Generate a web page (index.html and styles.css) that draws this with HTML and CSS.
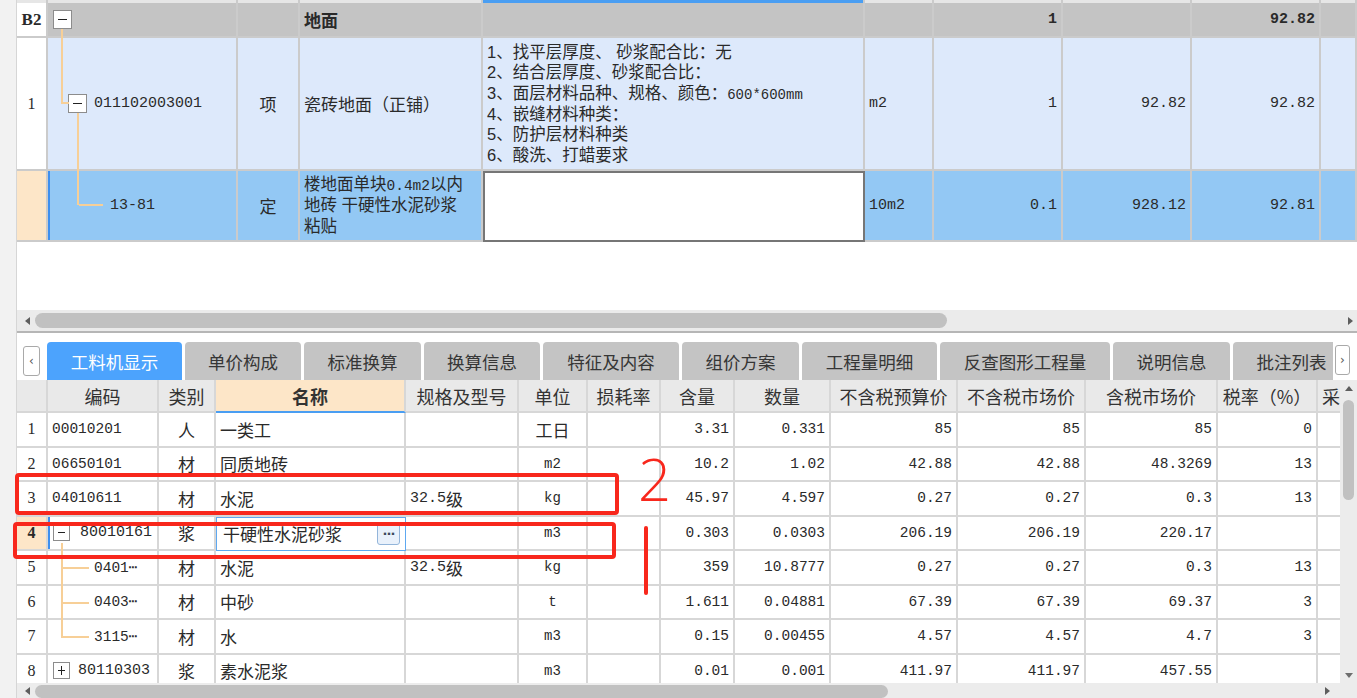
FILE: index.html
```html
<!DOCTYPE html>
<html lang="zh-CN">
<head>
<meta charset="utf-8">
<title>工料机显示</title>
<link rel="stylesheet" href="styles.css">
</head>
<body>
<div class="app">
  <div class="gutter"></div>
  <div class="main">
    <section class="upper">
      <div class="grid-top">
        <div class="c stub"></div><div class="c stub"></div><div class="c stub"></div><div class="c stub"></div><div class="c stub sel"></div><div class="c stub"></div><div class="c stub"></div><div class="c stub"></div><div class="c stub"></div><div class="c stub"></div>

        <div class="c rh rn bold b2">B2</div>
        <div class="c g tree1"><span class="box minus"></span></div>
        <div class="c g"></div>
        <div class="c g bold">地面</div>
        <div class="c g"></div>
        <div class="c g"></div>
        <div class="c g r n bold">1</div>
        <div class="c g"></div>
        <div class="c g r n bold">92.82</div>
        <div class="c g"></div>

        <div class="c rh rn">1</div>
        <div class="c lb tree2"><span class="box minus"></span><span class="n">011102003001</span></div>
        <div class="c lb ctr">项</div>
        <div class="c lb">瓷砖地面（正铺）</div>
        <div class="c lb desc">
          <div class="lines">
            <div class="ln">1、找平层厚度、 砂浆配合比：无</div>
            <div class="ln">2、结合层厚度、砂浆配合比：</div>
            <div class="ln">3、面层材料品种、规格、颜色：<span class="n sm">600*600mm</span></div>
            <div class="ln">4、嵌缝材料种类：</div>
            <div class="ln">5、防护层材料种类</div>
            <div class="ln">6、酸洗、打蜡要求</div>
          </div>
        </div>
        <div class="c lb n">m2</div>
        <div class="c lb r n">1</div>
        <div class="c lb r n">92.82</div>
        <div class="c lb r n">92.82</div>
        <div class="c lb"></div>

        <div class="c rh pe"></div>
        <div class="c sb tree3 selL"><span class="n">13-81</span></div>
        <div class="c sb ctr">定</div>
        <div class="c sb name3">
          <div class="lines3">
            <div class="ln3">楼地面单块<span class="n">0.4m2</span>以内</div>
            <div class="ln3">地砖 干硬性水泥砂浆</div>
            <div class="ln3">粘贴</div>
          </div>
        </div>
        <div class="c edit"></div>
        <div class="c sb n">10m2</div>
        <div class="c sb r n">0.1</div>
        <div class="c sb r n">928.12</div>
        <div class="c sb r n">92.81</div>
        <div class="c sb"></div>

        <span class="tl tl-a"></span>
        <span class="tl tl-b"></span>
        <span class="tl tl-c"></span>
        <span class="tl tl-d"></span>
      </div>
    </section>

    <div class="hs-top">
      <span class="tri-l"></span>
      <div class="thumb-top"></div>
      <div class="fill"></div>
      <span class="tri-r"></span>
    </div>

    <nav class="tabbar">
      <button class="tbtn tbtn-l">‹</button>
      <div class="tabs">
        <div class="tab active w135">工料机显示</div>
        <div class="tab w116">单价构成</div>
        <div class="tab w117">标准换算</div>
        <div class="tab w116">换算信息</div>
        <div class="tab w136">特征及内容</div>
        <div class="tab w117">组价方案</div>
        <div class="tab w135">工程量明细</div>
        <div class="tab w170">反查图形工程量</div>
        <div class="tab w117">说明信息</div>
        <div class="tab w117">批注列表</div>
      </div>
      <button class="tbtn tbtn-r">›</button>
    </nav>

    <section class="lower">
      <div class="grid-bot">
        <div class="h"></div><div class="h">编码</div><div class="h">类别</div><div class="h hsel">名称</div><div class="h">规格及型号</div><div class="h">单位</div><div class="h">损耗率</div><div class="h">含量</div><div class="h">数量</div><div class="h">不含税预算价</div><div class="h">不含税市场价</div><div class="h">含税市场价</div><div class="h">税率（%）</div><div class="h hl">采</div>

        <div class="d ctr rn">1</div><div class="d n">00010201</div><div class="d ctr">人</div><div class="d">一类工</div><div class="d"></div><div class="d ctr">工日</div><div class="d"></div><div class="d r n">3.31</div><div class="d r n">0.331</div><div class="d r n">85</div><div class="d r n">85</div><div class="d r n">85</div><div class="d r n">0</div><div class="d"></div>

        <div class="d ctr rn">2</div><div class="d n">06650101</div><div class="d ctr">材</div><div class="d">同质地砖</div><div class="d"></div><div class="d ctr n un">m2</div><div class="d"></div><div class="d r n">10.2</div><div class="d r n">1.02</div><div class="d r n">42.88</div><div class="d r n">42.88</div><div class="d r n">48.3269</div><div class="d r n">13</div><div class="d"></div>

        <div class="d ctr rn">3</div><div class="d n">04010611</div><div class="d ctr">材</div><div class="d">水泥</div><div class="d"><span class="n">32.5</span>级</div><div class="d ctr n un">kg</div><div class="d"></div><div class="d r n">45.97</div><div class="d r n">4.597</div><div class="d r n">0.27</div><div class="d r n">0.27</div><div class="d r n">0.3</div><div class="d r n">13</div><div class="d"></div>

        <div class="d ctr rn pe bold">4</div><div class="d sb btree selL"><span class="box bbox minus"></span><span class="n">80010161</span></div><div class="d sb ctr">浆</div><div class="d edit2"><span>干硬性水泥砂浆</span><span class="dots">···</span></div><div class="d sb"></div><div class="d sb ctr n un">m3</div><div class="d sb"></div><div class="d sb r n">0.303</div><div class="d sb r n">0.0303</div><div class="d sb r n">206.19</div><div class="d sb r n">206.19</div><div class="d sb r n">220.17</div><div class="d sb"></div><div class="d sb"></div>

        <div class="d ctr rn">5</div><div class="d n child">0401⋯</div><div class="d ctr">材</div><div class="d">水泥</div><div class="d"><span class="n">32.5</span>级</div><div class="d ctr n un">kg</div><div class="d"></div><div class="d r n">359</div><div class="d r n">10.8777</div><div class="d r n">0.27</div><div class="d r n">0.27</div><div class="d r n">0.3</div><div class="d r n">13</div><div class="d"></div>

        <div class="d ctr rn">6</div><div class="d n child">0403⋯</div><div class="d ctr">材</div><div class="d">中砂</div><div class="d"></div><div class="d ctr n un">t</div><div class="d"></div><div class="d r n">1.611</div><div class="d r n">0.04881</div><div class="d r n">67.39</div><div class="d r n">67.39</div><div class="d r n">69.37</div><div class="d r n">3</div><div class="d"></div>

        <div class="d ctr rn">7</div><div class="d n child">3115⋯</div><div class="d ctr">材</div><div class="d">水</div><div class="d"></div><div class="d ctr n un">m3</div><div class="d"></div><div class="d r n">0.15</div><div class="d r n">0.00455</div><div class="d r n">4.57</div><div class="d r n">4.57</div><div class="d r n">4.7</div><div class="d r n">3</div><div class="d"></div>

        <div class="d ctr rn">8</div><div class="d btree8"><span class="box bbox plus"></span><span class="n">80110303</span></div><div class="d ctr">浆</div><div class="d">素水泥浆</div><div class="d"></div><div class="d ctr n un">m3</div><div class="d"></div><div class="d r n">0.01</div><div class="d r n">0.001</div><div class="d r n">411.97</div><div class="d r n">411.97</div><div class="d r n">457.55</div><div class="d"></div><div class="d"></div>

        <span class="tl bl-v"></span>
        <span class="tl bl-h1"></span>
        <span class="tl bl-h2"></span>
        <span class="tl bl-h3"></span>
      </div>
      <div class="vscroll">
        <span class="tri-u"></span>
        <div class="vthumb"></div>
        <div class="fill"></div>
        <span class="tri-d"></span>
      </div>
    </section>

    <div class="hs-bot">
      <div class="hs-track">
        <span class="tri-l"></span>
        <div class="thumb-bot"></div>
        <div class="fill"></div>
        <span class="tri-r"></span>
      </div>
      <div class="corner"></div>
    </div>
  </div>

  <div class="mark rect1"></div>
  <div class="mark rect2"></div>
  <div class="mark vline"></div>
  <div class="mark two">2</div>
</div>
</body>
</html>
```

FILE: styles.css
```css
* { box-sizing: border-box; margin: 0; padding: 0; }
html, body { width: 1357px; height: 698px; overflow: hidden; background: #fff; }
body { font-family: "Noto Sans CJK SC", sans-serif; color: #2a2a2a; font-size: 17px; }

.app { position: relative; display: flex; width: 1357px; height: 698px; }
.gutter { width: 17px; flex: none; background: #f2f2f2; border-right: 1px solid #d6d6d6; }
.main { width: 1340px; flex: none; display: flex; flex-direction: column; }

.n { font-family: "Liberation Mono", "DejaVu Sans Mono", "Noto Sans CJK SC", monospace; font-size: 15px; }
.rn { font-family: "Liberation Serif", serif; font-size: 16px; }
.b2 { font-size: 17px; }
.bold { font-weight: bold; }
.sm { font-size: 14px; }

/* ---------- upper grid ---------- */
.upper { height: 310px; background: #fff; }
.grid-top {
  position: relative;
  display: grid;
  grid-template-columns: 31px 190px 62px 183px 382px 69px 129px 129px 129px 36px;
  grid-template-rows: 3px 35px 133px 71px;
  width: 1340px;
}
.c {
  display: flex; align-items: center;
  padding: 0 4px;
  border-right: 2px solid #cbcbcb;
  border-bottom: 2px solid #cbcbcb;
  white-space: nowrap; overflow: hidden;
}
.c.stub { background: #e6e6e6; border-bottom: 0; }
.c.stub.sel { background: #4a9ef2; }
.c.rh { justify-content: center; background: #fff; }
.g { background: #c4c4c4; }
.lb { background: #dde9fb; }
.sb { background: #93c8f4; }
.pe { background: #fde6c8 !important; }
.r { justify-content: flex-end; padding-right: 4px; }
.ctr { justify-content: center; }
.tree1 { padding-left: 5px; }
.tree2 { padding-left: 20px; gap: 7px; }
.tree3 { padding-left: 62px; }
.selL { box-shadow: inset 2px 0 0 #3d8ff0; }
.lines { display: flex; flex-direction: column; }
.ln {
  height: 20.6px; line-height: 20.6px; font-size: 16.5px;
  font-family: "Liberation Sans", "Noto Sans CJK SC", sans-serif;
}
.ln .n { line-height: 20.6px; }
.lines3 { display: flex; flex-direction: column; }
.ln3 {
  height: 21px; line-height: 21px; font-size: 16.5px;
  font-family: "Liberation Sans", "Noto Sans CJK SC", sans-serif;
}
.ln3 .n { line-height: 21px; font-size: 14.5px; }
.c.edit { background: #fff; border: 2px solid #767676; }

.box {
  position: relative; flex: none;
  width: 19px; height: 19px;
  background: #fff; border: 1px solid #8c8c8c;
}
.box::before {
  content: ""; position: absolute; left: 4px; right: 4px; top: 50%;
  height: 1px; margin-top: -1px; background: #222;
}
.box.plus::after {
  content: ""; position: absolute; top: 3px; bottom: 3px; left: 50%;
  width: 1px; margin-left: -1px; background: #222;
}
.bbox { width: 17px; height: 17px; }

.tl { position: absolute; background: #f7cf97; }
.tl-a { left: 44px; top: 29px; width: 2px; height: 75px; }
.tl-b { left: 46px; top: 102px; width: 6px; height: 2px; }
.tl-c { left: 60px; top: 113px; width: 2px; height: 92px; }
.tl-d { left: 62px; top: 204px; width: 24px; height: 2px; }

/* ---------- scrollbars ---------- */
.hs-top {
  height: 23px; display: flex; align-items: center;
  background: #ebebeb; border-bottom: 2px solid #b6b6b6;
  padding: 0 4px 0 8px;
}
.thumb-top { width: 912px; height: 15px; border-radius: 8px; background: #c1c1c1; margin-left: 5px; }
.fill { flex: 1; }
.tri-l { width: 0; height: 0; border-top: 4px solid transparent; border-bottom: 4px solid transparent; border-right: 5px solid #5e5e5e; }
.tri-r { width: 0; height: 0; border-top: 4px solid transparent; border-bottom: 4px solid transparent; border-left: 5px solid #5e5e5e; }
.tri-u { width: 0; height: 0; border-left: 4px solid transparent; border-right: 4px solid transparent; border-bottom: 5px solid #5e5e5e; }
.tri-d { width: 0; height: 0; border-left: 4px solid transparent; border-right: 4px solid transparent; border-top: 5px solid #6e6e6e; }

/* ---------- tabs ---------- */
.tabbar { height: 47px; display: flex; align-items: flex-end; padding-left: 6px; background: #fff; }
.tbtn {
  flex: none; height: 30px; margin-bottom: 4px;
  background: #fff; border: 1px solid #a9a9a9; border-radius: 3px;
  font-family: "DejaVu Sans", sans-serif; font-size: 12px; color: #555;
  display: flex; align-items: center; justify-content: center;
}
.tbtn-l { width: 17px; margin-right: 7px; }
.tbtn-r { width: 15px; margin: 0 7px 5px 2px; }
.tabs { flex: 1; display: flex; gap: 3px; overflow: hidden; height: 38px; }
.tab {
  flex: none; height: 38px;
  display: flex; align-items: center; justify-content: center;
  background: #c4c4c4; color: #363636;
  border-radius: 4px 4px 0 0;
  font-size: 17.5px; white-space: nowrap;
}
.tab.active { background: #4ca3fd; color: #fff; }
.w116 { width: 116px; } .w117 { width: 117px; } .w135 { width: 135px; } .w136 { width: 136px; } .w170 { width: 170px; }

/* ---------- lower grid ---------- */
.lower { height: 303px; display: flex; }
.grid-bot {
  position: relative;
  width: 1323px; height: 303px; overflow: hidden;
  display: grid;
  grid-template-columns: 31px 111px 57px 190px 113px 69px 73px 74px 96px 127px 128px 132px 100px 60px;
  grid-template-rows: 33px repeat(8, 34.5px);
}
.h, .d {
  display: flex; align-items: center;
  border-right: 2px solid #d7d7d7; border-bottom: 2px solid #d7d7d7;
  white-space: nowrap; overflow: hidden;
}
.h { justify-content: center; background: #e9e9e9; font-size: 18px; color: #333; }
.h.hsel { background: #fde6c8; font-weight: bold; border-bottom: 2px solid #4a9ef2; }
.h.hl { justify-content: flex-start; padding-left: 4px; }
.d { padding: 0 4px; background: #fff; }
.d.r { justify-content: flex-end; }
.d.ctr { justify-content: center; }
.d.n { font-size: 14.5px; }
.d.un { font-size: 14px; }
.btree { padding-left: 5px; gap: 10px; }
.btree8 { padding-left: 5px; gap: 8px; }
.d.child { padding-left: 46px; }
.d.edit2 {
  background: #fff; border: 1px solid #5ea8f0;
  justify-content: space-between; padding: 0 5px 0 6px;
}
.dots {
  width: 23px; height: 22px;
  display: flex; align-items: center; justify-content: center;
  background: #e9f1fb; border: 1px solid #93b5da; border-radius: 3px;
  font-family: "DejaVu Sans", sans-serif; font-size: 13px; font-weight: bold; color: #3b4a5c; letter-spacing: -1px;
}

.bl-v { left: 44px; top: 163px; width: 2px; height: 95px; }
.bl-h1 { left: 46px; top: 187px; width: 26px; height: 2px; }
.bl-h2 { left: 46px; top: 222px; width: 26px; height: 2px; }
.bl-h3 { left: 46px; top: 256px; width: 26px; height: 2px; }

.vscroll {
  width: 17px; height: 303px; flex: none;
  display: flex; flex-direction: column; align-items: center;
  background: #ececec; padding: 6px 0 5px;
}
.tri-u { margin-bottom: 9px; }
.vthumb { width: 11px; height: 100px; border-radius: 6px; background: #c1c1c1; }

.hs-bot { height: 15px; display: flex; }
.hs-track { width: 1323px; display: flex; align-items: center; background: #ececec; padding: 0 10px 0 8px; }
.thumb-bot { width: 853px; height: 13px; border-radius: 7px; background: #c1c1c1; margin-left: 5px; margin-top: 2px; }
.corner { flex: 1; background: #ececec; }

/* ---------- red annotations ---------- */
.mark { position: absolute; }
.rect1 { left: 15px; top: 473px; width: 604px; height: 42px; border: 4px solid #f8271c; border-radius: 4px; }
.rect2 { left: 13px; top: 522px; width: 603px; height: 37px; border: 4px solid #f8271c; border-radius: 4px; }
.vline { left: 644px; top: 526px; width: 4px; height: 69px; background: #f8271c; border-radius: 2px; }
.two {
  left: 638px; top: 450px;
  font-family: "Open Sans", "Liberation Sans", sans-serif; font-weight: 300;
  font-size: 58px; line-height: 58px; color: #f8271c;
}
```
